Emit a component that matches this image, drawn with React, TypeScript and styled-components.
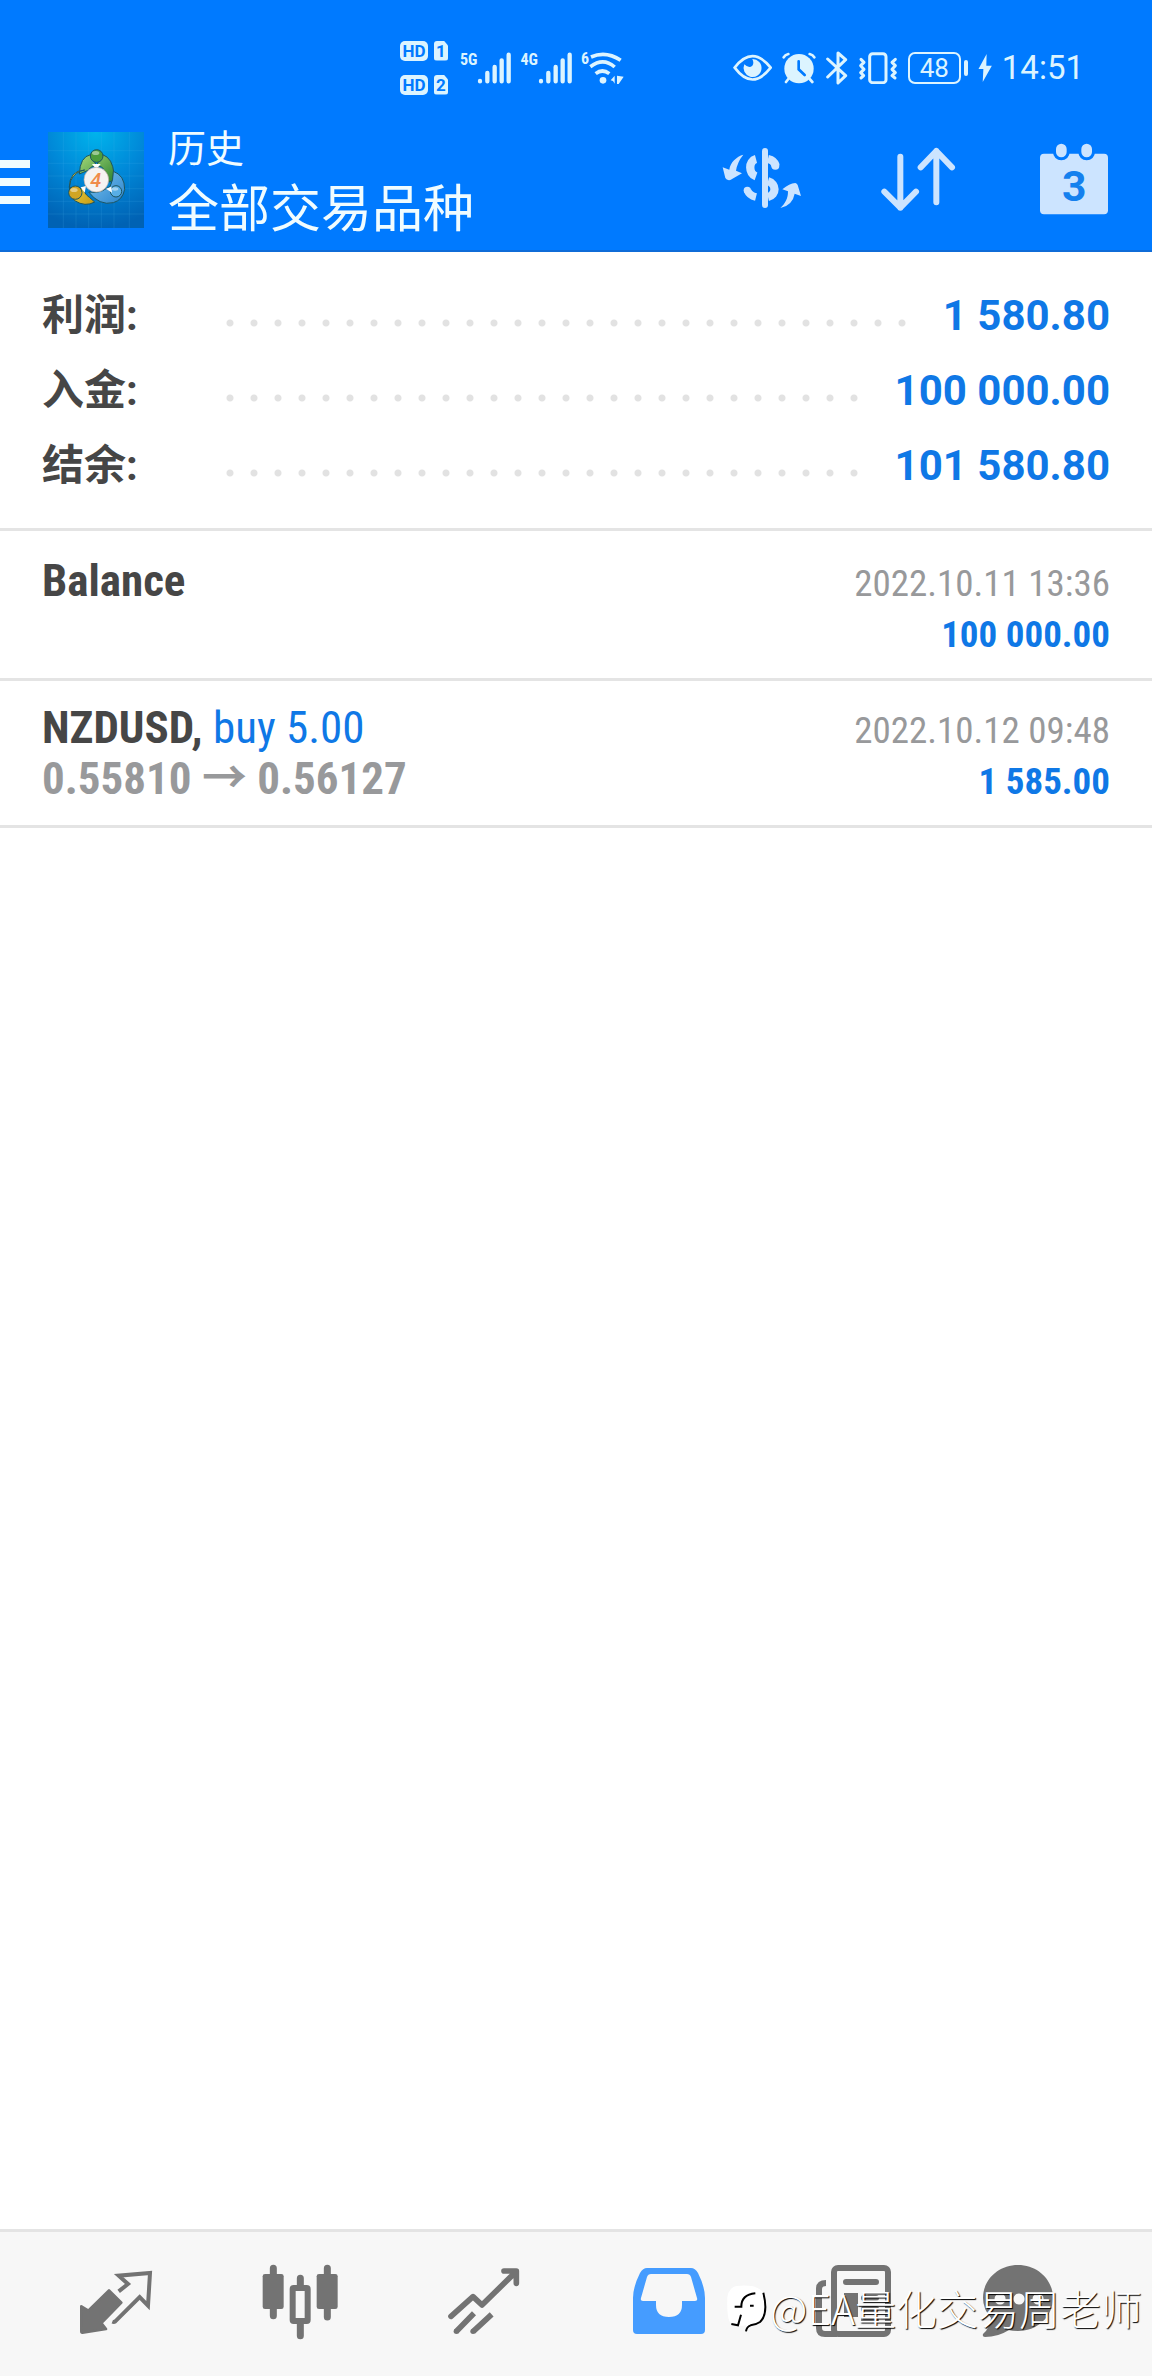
import React from "react";
import styled, { createGlobalStyle } from "styled-components";

const sans = `Roboto, "Noto Sans CJK SC", sans-serif`;
const narrow = `"Roboto Condensed", "Liberation Sans Narrow", "Noto Sans CJK SC", sans-serif`;

const color = {
  primary: "#007aff",
  amount: "#0f78e6",
  icon: "#cce4ff",
  status: "#dcf4ff",
  title: "#f0fcff",
  text: "#464646",
  muted: "#98999b",
  rule: "#e4e4e4",
  tab: "#737373",
  tabActive: "#459cff",
};

const GlobalStyle = createGlobalStyle`
  * { box-sizing: border-box; }
  body { margin: 0; background: #fff; font-family: ${sans}; }
  h1, p, dl, dd, ul { margin: 0; padding: 0; }
`;

const Screen = styled.div`
  display: flex;
  flex-direction: column;
  min-height: 100vh;
  background: #fff;
`;

/* ---------- status bar ---------- */

const StatusBar = styled.div`
  display: flex;
  align-items: center;
  justify-content: space-between;
  height: 110px;
  padding: 25px 68px 0 400px;
  background: ${color.primary};
  color: ${color.status};
  font-family: ${narrow};
`;

const StatusGroup = styled.div<{ $gap: number }>`
  display: flex;
  align-items: center;
  gap: ${(p) => p.$gap}px;
`;

const SimList = styled.div`
  display: grid;
  gap: 14px;
  margin-right: 4px;
`;

const SimRow = styled.div`
  display: flex;
  gap: 6px;
  color: ${color.primary};
  font: bold 17px/20px Roboto, sans-serif;
  text-align: center;
`;

const HdBadge = styled.span`
  width: 28px;
  height: 20px;
  border-radius: 5px;
  background: ${color.status};
`;

const SimBadge = styled(HdBadge)`
  width: 14px;
  border-radius: 3px;
  clip-path: polygon(0 0, 70% 0, 100% 25%, 100% 100%, 0 100%);
`;

const Signal = styled.div`
  display: flex;
  align-items: flex-start;
`;

const Network = styled.span`
  font-size: 16px;
  font-weight: bold;
  line-height: 16px;
`;

const Battery = styled.div`
  display: flex;
  align-items: center;
  gap: 3px;

  &::after {
    content: "";
    width: 4px;
    height: 16px;
    border-radius: 2px;
    background: ${color.status};
  }
`;

const BatteryLevel = styled.span`
  width: 53px;
  height: 32px;
  border: 2px solid ${color.status};
  border-radius: 7px;
  font: 26px/28px Roboto, sans-serif;
  text-align: center;
`;

const Clock = styled.time`
  font: 33px/40px Roboto, sans-serif;
`;

/* ---------- app bar ---------- */

const AppBar = styled.header`
  display: flex;
  align-items: center;
  height: 142px;
  padding-right: 38px;
  border-bottom: 2px solid #0f6cd8;
  background: ${color.primary};
`;

const IconButton = styled.button`
  display: flex;
  align-items: center;
  justify-content: center;
  padding: 0;
  border: 0;
  background: none;
  color: ${color.icon};
  cursor: pointer;
`;

const MenuButton = styled(IconButton)`
  flex-direction: column;
  align-items: flex-start;
  gap: 10px;
  width: 48px;
  height: 96px;
  padding-top: 4px;
`;

const MenuBar = styled.span`
  width: 30px;
  height: 8px;
  background: ${color.title};
`;

const Titles = styled.div`
  flex: 1;
  margin-left: 24px;
  padding-bottom: 3px;
  color: ${color.title};
  font-family: "Noto Sans CJK SC", sans-serif;
`;

const Title = styled.h1`
  font-size: 38px;
  font-weight: normal;
  line-height: 52px;
`;

const Subtitle = styled.p`
  font-size: 51px;
  line-height: 66px;
`;

const Actions = styled.div`
  display: flex;
  gap: 76px;
`;

/* ---------- summary ---------- */

const Summary = styled.dl`
  padding: 26px 42px 25px;
  border-bottom: 3px solid ${color.rule};
`;

const SummaryRow = styled.div`
  display: flex;
  align-items: center;
  font-size: 42px;
  font-weight: bold;
  line-height: 75px;
`;

const SummaryLabel = styled.dt`
  width: 176px;
  color: ${color.text};
`;

const Leader = styled.span`
  flex: 1;
  height: 8px;
  margin: 15px 28px 0 0;
  background: radial-gradient(circle, #e2e2e2 3px, transparent 4px) 0 0 / 24px 8px repeat-x;
`;

const SummaryValue = styled.dd`
  color: ${color.amount};
`;

/* ---------- deals ---------- */

const Deals = styled.ul`
  flex: 1;
  padding-top: 3px;
  list-style: none;
`;

const Deal = styled.li`
  display: grid;
  grid-template-columns: 1fr auto;
  grid-auto-rows: 51px;
  align-items: baseline;
  padding: 21px 42px;
  border-bottom: 3px solid ${color.rule};
  font-family: ${narrow};
  line-height: 51px;
`;

const Symbol = styled.span`
  color: ${color.text};
  font-size: 45px;
  font-weight: bold;
`;

const Volume = styled.span`
  color: ${color.amount};
  font-weight: normal;
`;

const Prices = styled.span`
  color: ${color.muted};
  font-size: 45px;
  font-weight: bold;
`;

const DealTime = styled.time`
  color: ${color.muted};
  font-size: 37px;
  text-align: right;
`;

const Amount = styled.span`
  color: ${color.amount};
  font-size: 37px;
  font-weight: bold;
  text-align: right;
`;

/* ---------- tab bar ---------- */

const TabBar = styled.nav`
  position: relative;
  display: grid;
  grid-template-columns: 184fr 184fr 184fr 185fr 185fr 143fr;
  height: 147px;
  padding: 0 63px 0 24px;
  border-top: 3px solid ${color.rule};
  background: #f7f7f7;
`;

const Tab = styled(IconButton)<{ $active?: boolean }>`
  color: ${(p) => (p.$active ? color.tabActive : color.tab)};
`;

const Watermark = styled.div`
  position: absolute;
  right: 10px;
  bottom: 41px;
  display: flex;
  align-items: center;
  gap: 2px;
  color: #fff;
  font: 300 41px/56px "Noto Sans CJK SC", sans-serif;
  text-shadow: 1px 1px 1px #000;
  white-space: nowrap;
  pointer-events: none;
`;

/* ---------- drawings ---------- */

const Bars = () => (
  <svg width="35" height="32" viewBox="287 93 105 96" stroke="currentColor" strokeWidth="13" strokeLinecap="round" aria-hidden="true">
    <path d="M296 180v1M318 156v25M340 138v43M361 118v63M382 101v80" />
  </svg>
);

const Wifi = () => (
  <svg width="36" height="34" viewBox="627 90 108 102" fill="none" stroke="currentColor" strokeWidth="11" aria-hidden="true">
    <path d="M633 108Q678 88 722 118M631 137Q670 108 704 138M647 158Q667 142 688 158" />
    <circle cx="669" cy="178" r="10" fill="currentColor" stroke="none" />
    <path d="M692 178l12-14v24l-5-8zM711 164l20 3-15 22h-5z" fill="currentColor" stroke="none" />
  </svg>
);

const Eye = () => (
  <svg width="39" height="28" viewBox="70 70 117 84" fill="none" stroke="currentColor" aria-hidden="true">
    <path d="M75 111Q128 42 183 111Q128 182 75 111z" strokeWidth="8" />
    <path d="M128 85a27 27 0 1 1-24 16q14 14 24 4q6-8 0-20z" fill="currentColor" stroke="none" />
  </svg>
);

const Alarm = () => (
  <svg width="34" height="32" viewBox="219 64 102 96" fill="none" stroke="currentColor" strokeLinecap="round" aria-hidden="true">
    <circle cx="270" cy="114" r="44" fill="currentColor" stroke="none" />
    <path d="M224 80q4-8 14-10M302 70q10 2 14 10M238 145l-7 9M302 145l8 9" strokeWidth="8" />
    <path d="M269 92v24l18 17" stroke={color.primary} strokeWidth="8" />
  </svg>
);

const Bluetooth = () => (
  <svg width="22" height="34" viewBox="351 60 66 102" fill="none" stroke="currentColor" strokeWidth="9" strokeLinejoin="round" strokeLinecap="round" aria-hidden="true">
    <path d="M356 84l54 50-23 22V66l23 20-54 52" />
  </svg>
);

const Vibrate = () => (
  <svg width="40" height="32" viewBox="448 62 120 96" fill="none" stroke="currentColor" strokeWidth="9" strokeLinecap="round" strokeLinejoin="round" aria-hidden="true">
    <rect x="483" y="67" width="49" height="87" rx="9" />
    <path d="M457 84l9 9-10 10 10 11-10 10 9 9-8 7M560 84l-10 9 10 10-10 11 10 10-10 9 9 7" />
  </svg>
);

const Bolt = () => (
  <svg width="14" height="28" viewBox="803 71 42 86" fill="currentColor" aria-hidden="true">
    <path d="M829 71l-25 46h15l-2 40 28-50h-17z" />
  </svg>
);

const Logo = () => (
  <svg width="96" height="96" viewBox="144 66 288 288" role="img" aria-label="MetaTrader 4">
    <defs>
      <radialGradient id="sky" cx="50%" cy="0%" r="100%">
        <stop offset="0" stopColor="#00b4ec" />
        <stop offset="0.5" stopColor="#0088d8" />
        <stop offset="1" stopColor="#0062b4" />
      </radialGradient>
      <linearGradient id="green" x1="0" y1="0" x2="1" y2="1">
        <stop offset="0" stopColor="#a5d97a" />
        <stop offset="1" stopColor="#2c8230" />
      </linearGradient>
      <linearGradient id="gold" x1="0" y1="0" x2="1" y2="1">
        <stop offset="0" stopColor="#f8e24c" />
        <stop offset="1" stopColor="#c49a16" />
      </linearGradient>
      <linearGradient id="blue" x1="0" y1="0" x2="1" y2="1">
        <stop offset="0" stopColor="#7cc4f0" />
        <stop offset="1" stopColor="#2a83cc" />
      </linearGradient>
    </defs>
    <path d="M144 66h288v288H144z" fill="url(#sky)" />
    <path d="M144 122h288M144 160h288M144 198h288M144 236h288M144 274h288M144 312h288M190 66v288M228 66v288M266 66v288M304 66v288M342 66v288M388 66v288" stroke="#4fb8ec" strokeOpacity="0.25" strokeWidth="2" />
    <g stroke="#1d5560" strokeWidth="3">
      <path d="M238 192Q240 140 272 134L289 166L308 134Q338 144 342 192Q342 216 326 216Q318 182 304 170H276L262 182Z" fill="url(#green)" />
      <path d="M254 180Q208 182 208 232L242 236L250 230Q250 250 268 262L284 276Q256 292 224 272Q200 250 212 212Q226 184 254 180Z" fill="url(#gold)" />
      <path d="M340 184Q374 196 374 238Q368 270 340 278Q298 288 266 246Q300 250 318 236L330 230Q340 212 340 184Z" fill="url(#blue)" />
      <circle cx="290" cy="138" r="19" fill="#4c9c3c" />
      <circle cx="226" cy="248" r="20" fill="#d0a524" />
      <circle cx="348" cy="244" r="17" fill="#58aee6" />
    </g>
    <g fill="#fff" fillOpacity="0.45">
      <ellipse cx="287" cy="129" rx="11" ry="6" />
      <ellipse cx="222" cy="240" rx="11" ry="6" />
      <ellipse cx="345" cy="237" rx="10" ry="5" />
    </g>
    <path d="M276 162h26l-13 16zM242 232l16-4-4 20zM318 236l16-6 2 18z" fill="#fff" />
    <circle cx="289" cy="209" r="37" fill="#f5f3f2" stroke="#b9a9a0" strokeWidth="2" />
    <text x="287" y="230" textAnchor="middle" fontFamily="Roboto, sans-serif" fontSize="60" fontStyle="italic" fontWeight="500" fill="#f08c4a">4</text>
  </svg>
);

const CurrencyIcon = () => (
  <svg width="80" height="80" viewBox="96 60 240 240" fill="none" stroke="currentColor" aria-hidden="true">
    <path d="M225 93v162" strokeWidth="18" strokeLinecap="round" />
    <path d="M198 117C175 123 175 161 198 169M234 117C248 120 254 126 257 137M234 184C260 191 260 225 234 231" strokeWidth="25" />
    <circle cx="256" cy="137" r="12" fill="currentColor" stroke="none" />
    <path d="M198 231Q178 226 173 212" strokeWidth="23" />
    <circle cx="172" cy="211" r="11" fill="currentColor" stroke="none" />
    <path d="M160 104C140 109 120 128 118 149L98 142L106 174Q110 182 121 180L156 160L138 152Q142 126 160 104zM271 264C286 250 294 236 294 214L277 208Q298 190 316 189Q321 190 323 195L333 228L314 221Q308 256 271 264z" fill="currentColor" stroke="none" />
  </svg>
);

const SortIcon = () => (
  <svg width="80" height="80" viewBox="563 60 240 240" fill="none" stroke="currentColor" strokeWidth="18" strokeLinecap="round" strokeLinejoin="round" aria-hidden="true">
    <path d="M630 110v153M582 215l48 48 47-48M738 247V93M691 142l47-49 47 49" />
  </svg>
);

const CalendarIcon = () => (
  <svg width="80" height="80" viewBox="1032 60 240 240" aria-hidden="true">
    <rect x="1050" y="101" width="204" height="182" rx="12" fill="currentColor" />
    <path d="M1114 88v8M1190 88v8" stroke={color.primary} strokeWidth="50" strokeLinecap="round" />
    <path d="M1114 87v9M1190 87v9" stroke="currentColor" strokeWidth="32" strokeLinecap="round" />
    <text x="1153" y="244" textAnchor="middle" fontFamily="Roboto, sans-serif" fontSize="128" fontWeight="700" fill="#1480ee">3</text>
  </svg>
);

const QuotesIcon = () => (
  <svg width="80" height="80" viewBox="108 162 240 240" fill="none" stroke="currentColor" aria-hidden="true">
    <path d="M124 289L145 302L207 241L244 278L184 339L198 357L127 368Q124 368 124 364Z" fill="currentColor" strokeWidth="8" strokeLinejoin="round" />
    <path d="M236 244L264 222L236 197L330 189L324 287L299 261L226 334Q222 337 217 335" strokeWidth="12" strokeLinejoin="miter" />
  </svg>
);

const ChartIcon = () => (
  <svg width="80" height="80" viewBox="658 162 240 240" fill="none" stroke="currentColor" aria-hidden="true">
    <path d="M698 175v142M860 175v146M779 205v30M779 335v42" strokeWidth="21" strokeLinecap="round" />
    <rect x="666" y="192" width="63" height="105" rx="7" fill="currentColor" stroke="none" />
    <rect x="828" y="192" width="63" height="105" rx="7" fill="currentColor" stroke="none" />
    <rect x="756" y="234" width="45" height="99" rx="3" fill="#f7f7f7" strokeWidth="18" />
  </svg>
);

const TradeIcon = () => (
  <svg width="80" height="80" viewBox="1211 162 240 240" fill="none" stroke="currentColor" strokeWidth="17" strokeLinejoin="round" aria-hidden="true">
    <path d="M1232 319L1298 260L1325 285L1424 188M1391 183H1428V220" strokeLinecap="round" />
    <path d="M1247 365L1301 310M1298 365L1354 313" />
    <circle cx="1248" cy="364" r="8" fill="currentColor" stroke="none" />
    <circle cx="1298" cy="364" r="8" fill="currentColor" stroke="none" />
  </svg>
);

const HistoryIcon = () => (
  <svg width="80" height="80" viewBox="0 0 80 80" aria-hidden="true">
    <path fill="currentColor" fillRule="evenodd" d="M18 4H62Q66 4 69 9Q76 23 76 34V66Q76 70 72 70H8Q4 70 4 66V34Q4 23 11 9Q14 4 18 4ZM22 10Q19 10 18 13L12 34Q11 37 14 37H27V41Q27 53 40 53Q53 53 53 41V37H66Q69 37 68 34L62 13Q61 10 58 10Z" />
  </svg>
);

const NewsIcon = () => (
  <svg width="80" height="80" viewBox="0 0 80 80" fill="none" stroke="currentColor" strokeWidth="6" aria-hidden="true">
    <rect x="20" y="4" width="54" height="66" rx="4" />
    <path d="M12 19q-7 0-7 6v39q0 6 6 6h12" />
    <path d="M32 18h30M50 34h12M50 45h12M50 56h12" strokeLinecap="round" />
    <path d="M30 29h14v24H30z" fill="currentColor" stroke="none" />
  </svg>
);

const ChatIcon = () => (
  <svg width="80" height="80" viewBox="0 0 80 80" aria-hidden="true">
    <path d="M40 1C60 1 75 16 75 34S60 67 40 67Q34 67 31 66Q20 73 7 73Q4 73 5 70Q12 64 13 54Q5 45 5 34C5 16 20 1 40 1Z" fill="currentColor" />
    <path d="M22 35h.1M41 35h.1M60 35h.1" stroke="#f7f7f7" strokeWidth="11" strokeLinecap="round" />
  </svg>
);

const WatermarkLogo = () => (
  <svg width="42" height="50" viewBox="72 144 126 150" fill="none" aria-hidden="true">
    <path d="M104 156Q180 148 190 190Q200 258 160 268L132 288V274Q96 280 82 262Q74 240 76 190Q80 160 104 156Z" fill="#fff" />
    <path d="M88 270l20 4 9-32M98 218h20q0-36 42-40M144 215h11M184 176q16 64-10 88-12 8-28 10-12 4-14 18" stroke="#000" strokeWidth="6" />
  </svg>
);

/* ---------- content ---------- */

const summary = [
  { label: "利润:", value: "1 580.80" },
  { label: "入金:", value: "100 000.00" },
  { label: "结余:", value: "101 580.80" },
];

const deals = [
  { symbol: "Balance", volume: "", prices: "\u00a0", time: "2022.10.11 13:36", amount: "100 000.00" },
  { symbol: "NZDUSD,", volume: "buy 5.00", prices: "0.55810 → 0.56127", time: "2022.10.12 09:48", amount: "1 585.00" },
];

const tabs = [
  { label: "行情", Icon: QuotesIcon },
  { label: "图表", Icon: ChartIcon },
  { label: "交易", Icon: TradeIcon },
  { label: "历史", Icon: HistoryIcon, active: true },
  { label: "新闻", Icon: NewsIcon },
  { label: "聊天", Icon: ChatIcon },
];

export default function App() {
  return (
    <Screen>
      <GlobalStyle />
      <StatusBar>
        <StatusGroup $gap={8}>
          <SimList>
            {["1", "2"].map((slot) => (
              <SimRow key={slot}>
                <HdBadge>HD</HdBadge>
                <SimBadge>{slot}</SimBadge>
              </SimRow>
            ))}
          </SimList>
          <Signal>
            <Network>5G</Network>
            <Bars />
          </Signal>
          <Signal>
            <Network>4G</Network>
            <Bars />
          </Signal>
          <Signal>
            <Network>6</Network>
            <Wifi />
          </Signal>
        </StatusGroup>
        <StatusGroup $gap={10}>
          <Eye />
          <Alarm />
          <Bluetooth />
          <Vibrate />
          <Battery>
            <BatteryLevel>48</BatteryLevel>
          </Battery>
          <Bolt />
          <Clock>14:51</Clock>
        </StatusGroup>
      </StatusBar>

      <AppBar>
        <MenuButton aria-label="菜单">
          <MenuBar />
          <MenuBar />
          <MenuBar />
        </MenuButton>
        <Logo />
        <Titles>
          <Title>历史</Title>
          <Subtitle>全部交易品种</Subtitle>
        </Titles>
        <Actions>
          <IconButton aria-label="货币">
            <CurrencyIcon />
          </IconButton>
          <IconButton aria-label="排序">
            <SortIcon />
          </IconButton>
          <IconButton aria-label="日期">
            <CalendarIcon />
          </IconButton>
        </Actions>
      </AppBar>

      <Summary>
        {summary.map((row) => (
          <SummaryRow key={row.label}>
            <SummaryLabel>{row.label}</SummaryLabel>
            <Leader />
            <SummaryValue>{row.value}</SummaryValue>
          </SummaryRow>
        ))}
      </Summary>

      <Deals>
        {deals.map((deal) => (
          <Deal key={deal.time}>
            <Symbol>
              {deal.symbol} <Volume>{deal.volume}</Volume>
            </Symbol>
            <DealTime>{deal.time}</DealTime>
            <Prices>{deal.prices}</Prices>
            <Amount>{deal.amount}</Amount>
          </Deal>
        ))}
      </Deals>

      <TabBar>
        {tabs.map(({ label, Icon, active }) => (
          <Tab key={label} $active={active} aria-label={label}>
            <Icon />
          </Tab>
        ))}
        <Watermark>
          <WatermarkLogo />
          @EA量化交易周老师
        </Watermark>
      </TabBar>
    </Screen>
  );
}
